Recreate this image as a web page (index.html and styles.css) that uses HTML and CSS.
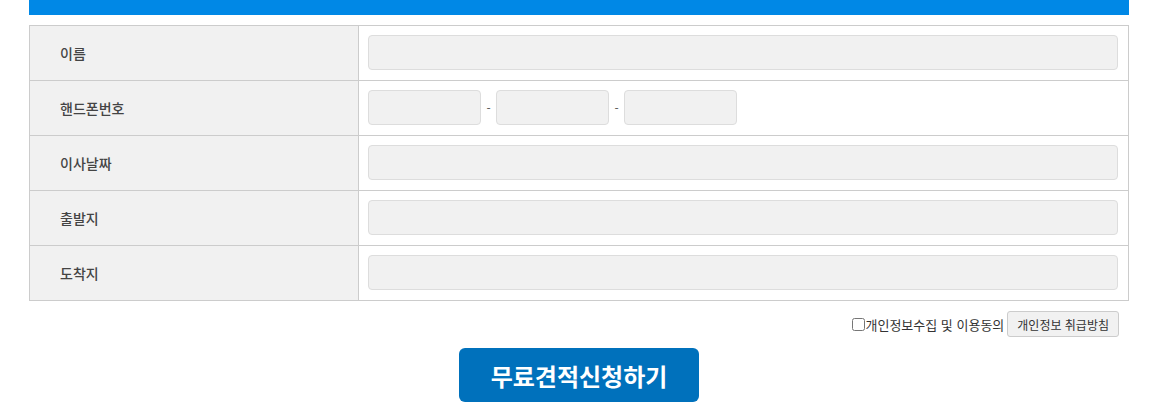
FILE: index.html
```html
<!DOCTYPE html>
<html lang="ko">
  <head>
    <meta charset="UTF-8" />
    <title>무료견적신청</title>
    <link rel="stylesheet" href="styles.css">
  </head>
  <body>
    <div class="wrap">
      <div class="top-bar"></div>
      <table class="form-table">
        <tr>
          <th>이름</th>
          <td><input type="text" class="full" /></td>
        </tr>
        <tr>
          <th>핸드폰번호</th>
          <td>
            <div class="phone">
              <input type="text" /><span class="dash">-</span><input type="text" /><span class="dash">-</span><input type="text" />
            </div>
          </td>
        </tr>
        <tr>
          <th>이사날짜</th>
          <td><input type="text" class="full" /></td>
        </tr>
        <tr>
          <th>출발지</th>
          <td><input type="text" class="full" /></td>
        </tr>
        <tr>
          <th>도착지</th>
          <td><input type="text" class="full" /></td>
        </tr>
      </table>
      <div class="agree">
        <label><input type="checkbox" />개인정보수집 및 이용동의</label>
        <button type="button" class="policy">개인정보 취급방침</button>
      </div>
      <div class="submit-row">
        <button type="button" class="submit">무료견적신청하기</button>
      </div>
    </div>
  </body>
</html>
```
FILE: styles.css
```css
body {
  margin: 0;
  font-family: "Noto Sans CJK KR", "Noto Sans", sans-serif;
  background: #ffffff;
}

.wrap {
  width: 1100px;
  margin-left: 29px;
}

.top-bar {
  height: 15px;
  background: #0088e6;
}

/* table */
.form-table {
  width: 100%;
  margin-top: 10px;
  border-collapse: collapse;
  border: 1px solid #cccccc;
}

.form-table th,
.form-table td {
  height: 55px;
  border: 1px solid #cccccc;
  padding: 0;
  box-sizing: border-box;
}

.form-table th {
  width: 329px;
  background: #f1f1f1;
  text-align: left;
  padding-left: 30px;
  font-size: 14px;
  font-weight: 500;
  color: #444444;
}

.form-table td {
  padding: 0 10px 1px 9px;
}

.form-table input {
  display: block;
  height: 35px;
  box-sizing: border-box;
  background: #f1f1f1;
  border: 1px solid #dddddd;
  border-radius: 4px;
  margin: 0;
}

.form-table input.full {
  width: 100%;
}

.phone {
  display: flex;
  align-items: center;
}

.phone input {
  width: 113px;
}

.dash {
  width: 15px;
  text-align: center;
  font-size: 12px;
  color: #555555;
}

/* agree */
.agree {
  display: flex;
  justify-content: flex-end;
  align-items: center;
  margin-top: 10px;
  padding-right: 10px;
  font-size: 13px;
  color: #333333;
}

.agree label {
  display: flex;
  align-items: center;
}

.agree input {
  margin: 0;
  width: 13px;
  height: 13px;
}

.policy {
  margin-left: 3px;
  height: 26px;
  padding: 0 9px;
  font-family: inherit;
  font-size: 12px;
  color: #333333;
  background: #f1f1f1;
  border: 1px solid #cccccc;
  border-radius: 3px;
}

/* submit */
.submit-row {
  display: flex;
  justify-content: center;
  margin-top: 11px;
}

.submit {
  width: 240px;
  height: 54px;
  background: #0071bc;
  color: #ffffff;
  border: none;
  border-radius: 6px;
  font-family: inherit;
  font-size: 24px;
  font-weight: 700;
}
```
